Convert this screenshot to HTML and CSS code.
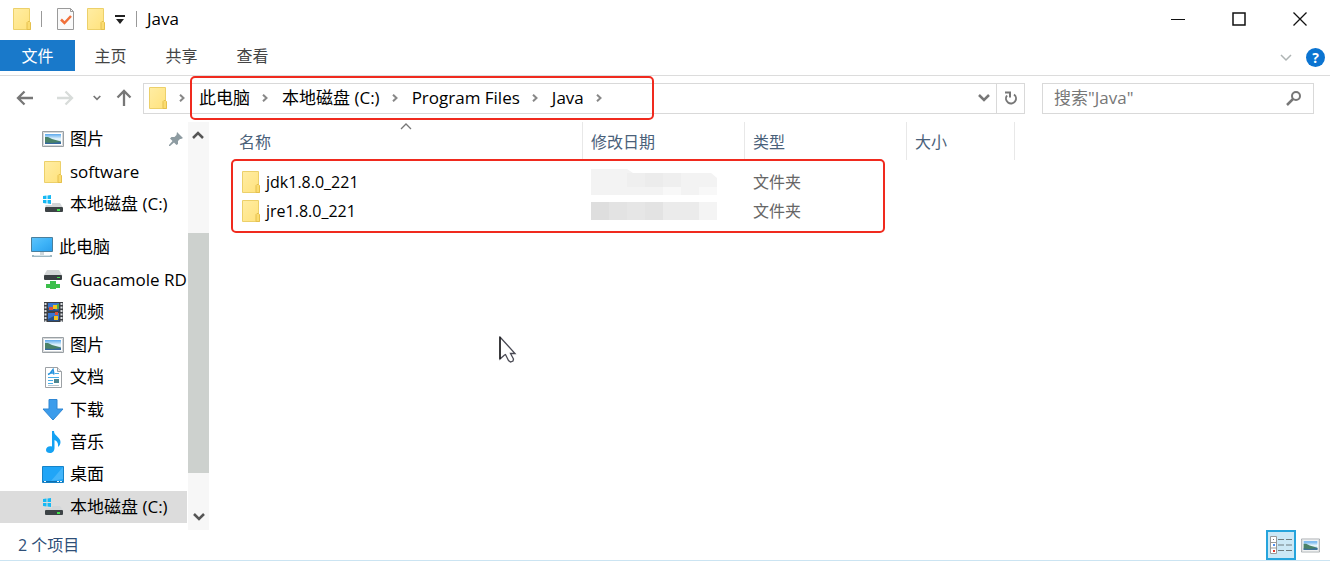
FILE: index.html
```html
<!DOCTYPE html>
<html lang="zh-CN">

<head>
    <meta charset="UTF-8">
    <meta name="viewport" content="width=device-width, initial-scale=1.0">
    <title>Java</title>
    <link rel="stylesheet" href="styles.css">
</head>

<body>
    <!-- Shared icons -->
    <svg class="icon-defs" aria-hidden="true">
        <defs>
            <linearGradient id="folder-fill" x1="0" y1="0" x2="1" y2="1">
                <stop offset="0" stop-color="#ffeda4" />
                <stop offset="1" stop-color="#ffe27c" />
            </linearGradient>
            <linearGradient id="screen-fill" x1="0" y1="0" x2="1" y2="1">
                <stop offset="0" stop-color="#5fc4fb" />
                <stop offset="0.5" stop-color="#3fb4f8" />
                <stop offset="1" stop-color="#2a9fec" />
            </linearGradient>
            <linearGradient id="sky-fill" x1="0" y1="0" x2="0" y2="1">
                <stop offset="0" stop-color="#5aa8ec" />
                <stop offset="0.5" stop-color="#e6f5fc" />
                <stop offset="1" stop-color="#9cc9ee" />
            </linearGradient>
        </defs>
        <symbol id="folder" viewBox="0 0 18 22">
            <path d="M.5.5h16v15l1 1v5H.5z" fill="url(#folder-fill)" stroke="#ecd06a" />
            <path d="M14 21.500v-7l1-1h1.500l1 1v7z" fill="#fbdc70" stroke="#e5c04e" />
        </symbol>
        <symbol id="picture" viewBox="0 0 22 16">
            <path d="M.5.5h21v15H.5z" fill="#fff" stroke="#9aa0a4" />
            <path d="M1.500 1.500h19v13h-19z" fill="none" stroke="#d5d8da" />
            <path d="M3 3h16v10H3z" fill="url(#sky-fill)" />
            <path d="M3 6l3 0 4 2 9 2.500V13H3z" fill="#4a8268" />
            <path d="M3 11.500l7 .5 9-1v2H3z" fill="#3568a0" />
        </symbol>
        <symbol id="drive" viewBox="0 0 20 18">
            <path d="M0 1l3.500-.5V4H0zM4.500.4L8 0v4H4.500zM0 5h3.500v3.500L0 8zM4.500 5H8v4l-3.500-.5z" fill="#16b9f4" />
            <path d="M9 8h8l2.500 4H2.500V10H9z" fill="#d3d6d8" />
            <rect x="2" y="12" width="18" height="5" rx="1" fill="#3d4346" />
            <rect x="14" y="14" width="3" height="2" fill="#42e04c" />
        </symbol>
        <symbol id="net-drive" viewBox="0 0 20 19">
            <path d="M4 0h12l3.500 6H.5z" fill="#d4d7d8" />
            <rect x="1" y="5" width="18" height="5" rx="1" fill="#393f42" />
            <rect x="14" y="7" width="3" height="1" fill="#42e04c" />
            <path d="M7 11h6v3h4v4h-4v1H7v-1H3v-4h4z" fill="#3cbf4b" />
        </symbol>
        <symbol id="computer" viewBox="0 0 22 21">
            <path d="M.5.5h21v14H.5z" fill="url(#screen-fill)" stroke="#4b7f9c" />
            <path d="M9 15h4v3H9z" fill="#cfd8dc" />
            <path d="M1 18h20v2H1z" fill="#9fb8c2" />
            <path d="M3 18h16v1H3z" fill="#d7e4e9" />
        </symbol>
        <symbol id="video" viewBox="0 0 19 20">
            <path d="M0 0h19v20H0z" fill="#3c3f44" />
            <path d="M1.500 1v19M17.500 1v19" stroke="#dadde0" stroke-width="2" stroke-dasharray="2 1.500" />
            <path d="M4 1h11v8H4zM4 11h11v8H4z" fill="#3975cf" />
            <path d="M4 6l5-1 3 3 3-1v2H4zM4 17l6-3 5 3v2H4z" fill="#275087" />
            <path d="M9 3h4v4H9zM10 14h4v4h-4z" fill="#f1c21e" />
            <path d="M5 5h4v3H5zM11 10h3v3h-3z" fill="#dc5036" />
            <path d="M13 2h2v5h-2z" fill="#4daa4b" />
        </symbol>
        <symbol id="document" viewBox="0 0 17 21">
            <path d="M.5.5h12l4 4v16H.5z" fill="#fff" stroke="#9ca1a5" />
            <path d="M12.500.5v4h4" fill="#e8eaec" stroke="#9ca1a5" />
            <path d="M3 7.500l2-1 3-4 1 5M5 6h3" fill="none" stroke="#2493df" stroke-width="1.500" />
            <path d="M10 6.500h4M3 10.500h11M3 13.500h5M3 16.500h5" stroke="#47aee9" />
            <path d="M9 12h5v4H9z" fill="#4d8792" />
            <path d="M3 18.500h11" stroke="#b9c8d0" />
        </symbol>
        <symbol id="download" viewBox="0 0 22 22">
            <path d="M7 .5h8V10h6L11 21 1 10h6z" fill="#3c9ceb" stroke="#2f86d3" />
        </symbol>
        <symbol id="music" viewBox="0 0 15 22">
            <path d="M6 0h2c0 5 6.500 6 6.500 11 0 2-1 4-2.500 5 .5-4-1-6-3.500-7v8c0 3-2 5-4.500 5-2.500 0-4-1.300-4-3 0-3 3-4.500 6-3.500z" fill="#16a2f3" />
        </symbol>
        <symbol id="desktop" viewBox="0 0 22 17">
            <path d="M.5.5h21v16H.5z" fill="#20a5f7" stroke="#1683c8" />
            <path d="M21 1v12L9 15z" fill="#43b5fa" />
            <path d="M1 15.500h20" stroke="#0f6fae" />
            <path d="M2 15.500h2M15 15.500h5" stroke="#e9f7ff" stroke-dasharray="2 1" />
        </symbol>
        <symbol id="chevron-right" viewBox="0 0 6 8">
            <path d="M1 .7L4.500 4 1 7.300" fill="none" stroke="currentColor" stroke-width="2" />
        </symbol>
        <symbol id="chevron-down" viewBox="0 0 12 8">
            <path d="M1 1l5 5 5-5" fill="none" stroke="currentColor" stroke-width="2.500" />
        </symbol>
        <symbol id="arrow-left" viewBox="0 0 18 16">
            <path d="M17 8H2M8.500 1.500L2 8l6.500 6.500" fill="none" stroke="currentColor" stroke-width="2.300" />
        </symbol>
    </svg>

    <!-- Title bar -->
    <header class="title-bar">
        <svg class="icon-folder"><use href="#folder" /></svg>
        <span class="divider"></span>
        <button class="quick-button" aria-label="属性">
            <svg width="17" height="22" viewBox="0 0 17 22">
                <path d="M.5.5h13l3 3v18H.5z" fill="#fafafa" stroke="#9a9a9a" />
                <path d="M13.500.5v3h3" fill="none" stroke="#9a9a9a" />
                <path d="M4 11.500l3.500 3.500L14 8" fill="none" stroke="#f0703a" stroke-width="2.500" />
            </svg>
        </button>
        <button class="quick-button" aria-label="新建文件夹"><svg class="icon-folder"><use href="#folder" /></svg></button>
        <button class="quick-button customize" aria-label="自定义快速访问工具栏">
            <svg width="10" height="9" viewBox="0 0 10 9">
                <path d="M0 0h10v2H0zM1 4h8L5 9z" fill="#222" />
            </svg>
        </button>
        <span class="divider"></span>
        <span class="window-title">Java</span>
        <div class="window-buttons">
            <button aria-label="最小化"><svg width="14" height="14"><path d="M0 7.500h14" stroke="#111" /></svg></button>
            <button aria-label="最大化"><svg width="14" height="14"><path d="M1 1h12v12H1z" fill="none" stroke="#111" stroke-width="1.500" /></svg></button>
            <button aria-label="关闭"><svg width="14" height="14"><path d="M.5.5l13 13M13.500.5l-13 13" stroke="#111" stroke-width="1.300" /></svg></button>
        </div>
    </header>

    <!-- Ribbon tabs -->
    <nav class="ribbon">
        <button class="tab active">文件</button>
        <button class="tab">主页</button>
        <button class="tab">共享</button>
        <button class="tab">查看</button>
        <div class="ribbon-end">
            <button class="expand" aria-label="展开功能区"><svg width="12" height="8" viewBox="0 0 12 8"><path d="M1 1l5 5 5-5" fill="none" stroke="#aeb4b4" stroke-width="1.500" /></svg></button>
            <button class="help" aria-label="帮助">?</button>
        </div>
    </nav>

    <!-- Address bar -->
    <div class="address-row">
        <div class="history">
            <button aria-label="后退"><svg width="18" height="16"><use href="#arrow-left" /></svg></button>
            <button class="forward" aria-label="前进" disabled><svg width="18" height="16"><use href="#arrow-left" /></svg></button>
            <button class="recent" aria-label="最近浏览的位置"><svg width="8" height="6"><use href="#chevron-down" /></svg></button>
            <button class="up" aria-label="上移"><svg width="18" height="16"><use href="#arrow-left" /></svg></button>
        </div>
        <div class="address">
            <svg class="icon-folder"><use href="#folder" /></svg>
            <svg class="crumb-arrow"><use href="#chevron-right" /></svg>
            <nav class="breadcrumb">
                <a href="#">此电脑</a><svg class="crumb-arrow"><use href="#chevron-right" /></svg>
                <a href="#">本地磁盘 (C:)</a><svg class="crumb-arrow"><use href="#chevron-right" /></svg>
                <a href="#">Program Files</a><svg class="crumb-arrow"><use href="#chevron-right" /></svg>
                <a href="#">Java</a><svg class="crumb-arrow"><use href="#chevron-right" /></svg>
                <span class="mark mark-path"></span>
            </nav>
            <button class="address-drop" aria-label="以前的位置"><svg width="12" height="8"><use href="#chevron-down" /></svg></button>
            <button class="refresh" aria-label="刷新">
                <svg width="14" height="16" viewBox="0 0 14 16">
                    <path d="M10 4.500a5 5 0 1 1-7 1" fill="none" stroke="#777" stroke-width="2" />
                    <path d="M1 2.500h5v5" fill="none" stroke="#777" stroke-width="2" />
                </svg>
            </button>
        </div>
        <div class="search">
            <input type="text" placeholder='搜索"Java"' aria-label="搜索">
            <svg width="16" height="16" viewBox="0 0 16 16">
                <circle cx="10" cy="6" r="4" fill="none" stroke="#777" stroke-width="2" />
                <path d="M7 9l-6 6" stroke="#777" stroke-width="2.500" />
            </svg>
        </div>
    </div>

    <div class="content">
        <!-- Navigation pane -->
        <aside class="sidebar">
            <ul class="tree quick-access">
                <li><a href="#"><svg width="22" height="16"><use href="#picture" /></svg><span>图片</span>
                    <svg class="pin" width="14" height="14" viewBox="0 0 14 14">
                        <path d="M8 0l6 6-2 1-1 0-2 2 0 3-1.500 1L5 10.500 1 14l-1 0 0-1L3.500 9 1 6.500 2.500 5h3L7.500 3z" fill="#8d9ba1" />
                    </svg></a></li>
                <li><a href="#"><svg width="18" height="22"><use href="#folder" /></svg><span>software</span></a></li>
                <li><a href="#"><svg width="20" height="18"><use href="#drive" /></svg><span>本地磁盘 (C:)</span></a></li>
            </ul>
            <ul class="tree this-pc">
                <li class="root"><a href="#"><svg width="22" height="21"><use href="#computer" /></svg><span>此电脑</span></a></li>
                <li><a href="#"><svg width="20" height="19"><use href="#net-drive" /></svg><span>Guacamole RD</span></a></li>
                <li><a href="#"><svg width="19" height="20"><use href="#video" /></svg><span>视频</span></a></li>
                <li><a href="#"><svg width="22" height="16"><use href="#picture" /></svg><span>图片</span></a></li>
                <li><a href="#"><svg width="17" height="21"><use href="#document" /></svg><span>文档</span></a></li>
                <li><a href="#"><svg width="22" height="22"><use href="#download" /></svg><span>下载</span></a></li>
                <li><a href="#"><svg width="15" height="22"><use href="#music" /></svg><span>音乐</span></a></li>
                <li><a href="#"><svg width="22" height="17"><use href="#desktop" /></svg><span>桌面</span></a></li>
                <li class="selected"><a href="#"><svg width="20" height="18"><use href="#drive" /></svg><span>本地磁盘 (C:)</span></a></li>
            </ul>
        </aside>

        <div class="scrollbar">
            <button class="scroll-up" aria-label="向上滚动"><svg width="12" height="8"><use href="#chevron-down" /></svg></button>
            <div class="thumb"></div>
            <button class="scroll-down" aria-label="向下滚动"><svg width="12" height="8"><use href="#chevron-down" /></svg></button>
        </div>

        <!-- File list -->
        <main class="files">
            <table>
                <thead>
                    <tr>
                        <th class="col-name">名称<svg class="sort" width="12" height="7" viewBox="0 0 12 7"><path d="M1 6l5-5 5 5" fill="none" stroke="#777" stroke-width="1.300" /></svg></th>
                        <th class="col-date">修改日期</th>
                        <th class="col-type">类型</th>
                        <th class="col-size">大小</th>
                    </tr>
                </thead>
                <tbody>
                    <tr>
                        <td><a href="#"><svg class="icon-folder"><use href="#folder" /></svg>jdk1.8.0_221</a></td>
                        <td>
                            <svg class="blurred" width="126" height="26">
                                <path d="M0 0h36l6 4h78l6 5v17H0z" fill="#f3f3f3" />
                                <path d="M54 4h18v14H54z" fill="#ececec" />
                                <path d="M36 4h18v14H36zM72 4h18v14H72z" fill="#efefef" />
                                <path d="M72 18h18v8H72zM108 18h18v8h-18z" fill="#f8f8f8" />
                            </svg>
                        </td>
                        <td>文件夹</td>
                        <td></td>
                    </tr>
                    <tr>
                        <td><a href="#"><svg class="icon-folder"><use href="#folder" /></svg>jre1.8.0_221</a></td>
                        <td>
                            <svg class="blurred" width="126" height="18">
                                <path d="M0 0h126v18H0z" fill="#ebebeb" />
                                <path d="M0 0h18v18H0z" fill="#dedede" />
                                <path d="M18 0h18v18H18zM54 0h18v18H54z" fill="#e3e3e3" />
                                <path d="M36 0h18v18H36z" fill="#e6e6e6" />
                                <path d="M108 0h18v18h-18z" fill="#f4f4f4" />
                            </svg>
                        </td>
                        <td>文件夹</td>
                        <td></td>
                    </tr>
                </tbody>
            </table>
            <span class="mark mark-rows"></span>
        </main>
    </div>

    <!-- Status bar -->
    <footer class="status-bar">
        <span>2 个项目</span>
        <div class="views">
            <button class="view active" aria-label="详细信息">
                <svg width="22" height="18" viewBox="0 0 22 18">
                    <path d="M.5.5h6v17h-6zM.5 6.500h6M.5 12h6" fill="#fff" stroke="#999" />
                    <path d="M8 3.500h6M16 3.500h6M8 9h6M16 9h6M8 14.500h6M16 14.500h6" stroke="#6f7d80" />
                    <path d="M3 3h1v1H3z" fill="#777" />
                    <path d="M3 8h2v2H3z" fill="#4d8ff0" />
                    <path d="M3 14h2v2H3z" fill="#e03a2e" />
                </svg>
            </button>
            <button class="view" aria-label="大缩略图"><svg width="19" height="15"><use href="#picture" /></svg></button>
        </div>
    </footer>

    <svg class="cursor" width="18" height="28" viewBox="0 0 18 28" aria-hidden="true">
        <path d="M1 1v22l4.500-4 1-.5 3 6 2 1.500 2.500-1 .5-2-3-5.500H16z" fill="#fff" stroke="#4a4a54" stroke-width="1.300" />
        <path d="M1 1v22" stroke="#111" stroke-width="1.300" />
    </svg>
</body>

</html>
```

FILE: styles.css
```css
* {
    box-sizing: border-box;
}

body {
    display: flex;
    flex-direction: column;
    height: 100vh;
    margin: 0;
    background-color: #fff;
    color: #000;
    font-family: "Open Sans", "Noto Sans CJK SC", sans-serif;
    font-size: 16px;
    line-height: 24px;
    overflow: hidden;
}

button {
    display: flex;
    align-items: center;
    justify-content: center;
    padding: 0;
    border: none;
    background: none;
    color: inherit;
    font: inherit;
}

a {
    color: inherit;
    text-decoration: none;
}

svg {
    flex: none;
    display: block;
}

.icon-defs {
    position: absolute;
    width: 0;
    height: 0;
}

.icon-folder {
    width: 18px;
    height: 22px;
}

/* Title bar */
.title-bar {
    display: flex;
    align-items: center;
    height: 40px;
    padding: 0 0 2px 13px;
}

.divider {
    width: 1px;
    height: 16px;
    margin: 0 10px;
    background-color: #999;
}

.quick-button {
    margin-left: 5px;
    margin-right: 8px;
}

.quick-button.customize {
    margin: 0 1px 0 2px;
}

.window-title {
    font-size: 17px;
}

.window-buttons {
    display: flex;
    margin-left: auto;
}

.window-buttons button {
    width: 61px;
    height: 36px;
}

/* Ribbon */
.ribbon {
    display: flex;
    height: 36px;
    border-bottom: 1px solid #dcdcdc;
    color: #444;
}

.tab {
    width: 71px;
    height: 31px;
}

.tab.active {
    width: 75px;
    background-color: #1979ca;
    color: #fff;
}

.ribbon-end {
    display: flex;
    align-items: center;
    gap: 14px;
    margin-left: auto;
    padding-right: 5px;
}

.help {
    width: 19px;
    height: 19px;
    border-radius: 50%;
    background-color: #0b74d1;
    color: #fff;
    font-size: 14px;
    font-weight: bold;
    line-height: 19px;
}

/* Address bar */
.address-row {
    display: flex;
    align-items: center;
    height: 46px;
    padding: 0 16px 2px;
    font-size: 17px;
}

.history {
    display: flex;
    align-items: center;
    width: 127px;
    color: #777;
}

.history button {
    margin-right: 22px;
}

.history .forward {
    margin-right: 19px;
    color: #d8dcda;
    transform: scaleX(-1);
}

.history .recent {
    margin-right: 14px;
}

.history .up {
    margin-right: 0;
    transform: rotate(90deg);
}

.address {
    display: flex;
    align-items: center;
    flex: 1;
    height: 31px;
    border: 1px solid #d9d9d9;
    padding-left: 5px;
}

.crumb-arrow {
    width: 6px;
    height: 8px;
    margin: 0 14px 0 12px;
    color: #888;
}

.breadcrumb {
    position: relative;
    display: flex;
    align-items: center;
}

.mark {
    position: absolute;
    border: 2px solid #f02a1e;
    border-radius: 5px;
    pointer-events: none;
}

.mark-path {
    top: -10px;
    bottom: -10px;
    left: -9px;
    width: 464px;
}

.address-drop {
    width: 24px;
    height: 100%;
    margin-left: auto;
    color: #777;
}

.refresh {
    width: 28px;
    height: 100%;
    border-left: 1px solid #d9d9d9;
}

.search {
    display: flex;
    align-items: center;
    width: 272px;
    height: 31px;
    margin-left: 17px;
    padding: 0 11px;
    border: 1px solid #d9d9d9;
}

.search input {
    flex: 1;
    min-width: 0;
    padding: 0;
    border: none;
    outline: none;
    background: none;
    font: inherit;
}

.search input::placeholder {
    color: #777;
}

/* Navigation pane */
.content {
    display: flex;
    flex: 1;
    min-height: 0;
}

.sidebar {
    display: flex;
    flex-direction: column;
    gap: 11px;
    width: 187px;
    padding: 1px 0 7px;
    font-size: 17px;
}

.tree {
    display: flex;
    flex-direction: column;
    margin: 0;
    padding: 0;
    list-style: none;
}

.quick-access {
    flex: 3;
}

.this-pc {
    flex: 9;
}

.tree li {
    flex: 1;
    min-height: 0;
}

.tree a {
    display: grid;
    grid-template-columns: 22px 1fr auto;
    align-items: center;
    gap: 6px;
    height: 100%;
    padding-left: 42px;
    overflow: hidden;
    white-space: nowrap;
}

.tree a svg:first-child {
    justify-self: center;
}

.tree .root a {
    padding-left: 31px;
}

.pin {
    margin-right: 4px;
}

.tree .selected {
    background-color: #dcdcdc;
}

.scrollbar {
    display: grid;
    grid-template-rows: 26px 85fr 240fr 31fr 26px;
    width: 21px;
    margin-left: 1px;
    background-color: #f7f7f7;
    color: #555;
}

.thumb {
    grid-row: 3;
    background-color: #cdd1ce;
}

.scroll-up {
    transform: rotate(180deg);
}

.scroll-down {
    grid-row: 5;
}

/* File list */
.files {
    position: relative;
    flex: 1;
}

.files table {
    table-layout: fixed;
    width: 806px;
    border-collapse: separate;
    border-spacing: 0;
}

.files th {
    position: relative;
    height: 38px;
    padding: 1px 0 0 8px;
    border-right: 1px solid #e8e8e8;
    color: #4a617a;
    font-weight: normal;
    text-align: left;
}

.files .col-name {
    width: 374px;
    padding-left: 30px;
}

.col-date,
.col-type {
    width: 162px;
}

.sort {
    position: absolute;
    top: 1px;
    right: 170px;
}

.files td {
    height: 29px;
    padding: 0 0 0 8px;
    color: #666;
}

.files tbody tr:first-child td {
    height: 36px;
    padding-top: 7px;
}

.files td a {
    display: flex;
    align-items: center;
    gap: 6px;
    padding-left: 25px;
    color: #000;
}

.mark-rows {
    top: 37px;
    left: 22px;
    width: 654px;
    height: 74px;
}

/* Status bar */
.status-bar {
    display: flex;
    align-items: center;
    height: 31px;
    padding: 0 6px 0 18px;
    border-bottom: 1px solid #cbe4f2;
    color: #2f4f78;
}

.views {
    display: flex;
    align-self: stretch;
    margin-left: auto;
}

.view {
    width: 28px;
}

.view.active {
    width: 30px;
    border: 2px solid #26a4dc;
    background-color: #cbe8f6;
}

.cursor {
    position: absolute;
    top: 336px;
    left: 499px;
}
```
